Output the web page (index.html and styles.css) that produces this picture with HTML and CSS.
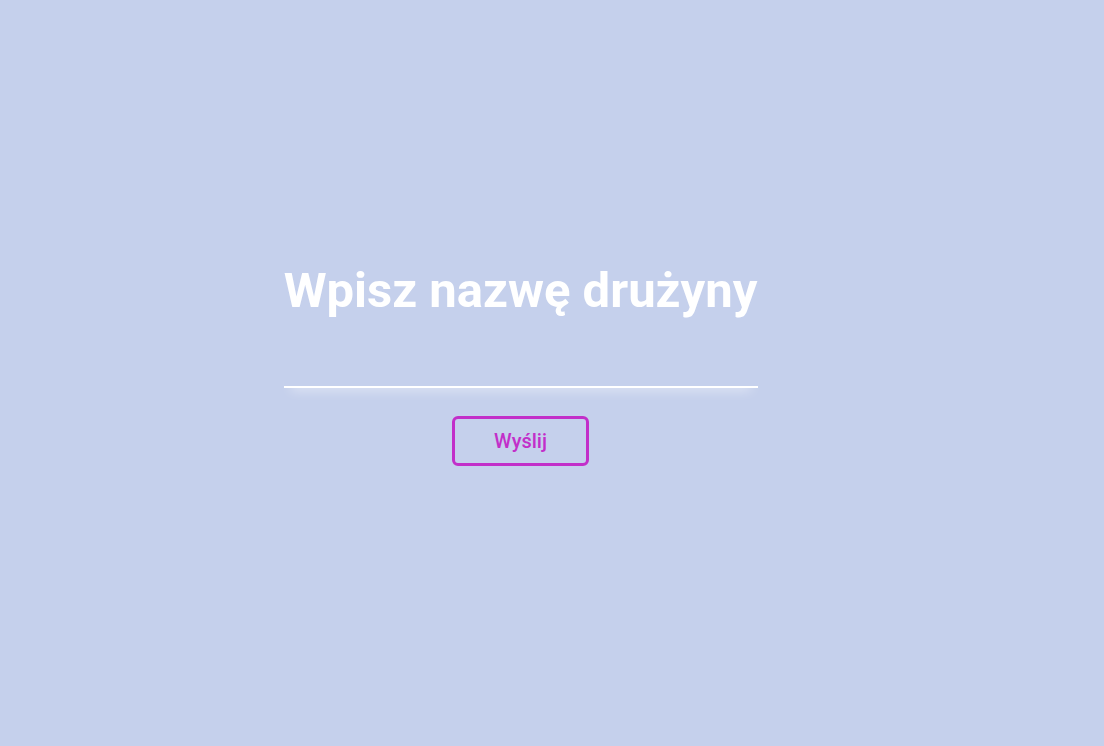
FILE: index.html
```html
<!DOCTYPE html>
<html lang="pl">
<head>
<meta charset="utf-8">
<link rel="stylesheet" href="styles.css">
</head>
<body>
<main class="page">
  <form class="team-form">
    <h1 class="title">Wpisz nazwę drużyny</h1>
    <input class="team-input" type="text" aria-label="Nazwa drużyny">
    <button class="submit" type="button">Wyślij</button>
  </form>
</main>
</body>
</html>
```
FILE: styles.css
```css
html, body {
  margin: 0;
  padding: 0;
  height: 100%;
}
body {
  background: #c5d0ec;
  font-family: Roboto, "Liberation Sans", sans-serif;
}
.page {
  display: flex;
  justify-content: center;
  padding-right: 63px;
  padding-top: 256px;
  box-sizing: border-box;
  height: 100%;
}
.team-form {
  display: flex;
  flex-direction: column;
  align-items: center;
  width: 474px;
}
.title {
  margin: 0;
  color: #ffffff;
  font-size: 49px;
  font-weight: 700;
  line-height: 70px;
  white-space: nowrap;
}
.team-input {
  margin-top: 40px;
  width: 100%;
  height: 22px;
  box-sizing: border-box;
  border: none;
  border-bottom: 2px solid #ffffff;
  background: transparent;
  outline: none;
  box-shadow: 0 9px 12px -7px rgba(255, 255, 255, 0.55);
}
.submit {
  margin-top: 28px;
  width: 137px;
  height: 50px;
  border: 3px solid #c22fc9;
  border-radius: 6px;
  background: transparent;
  color: #c22fc9;
  font-family: Roboto, "Liberation Sans", sans-serif;
  font-size: 20px;
  font-weight: 500;
}
```
